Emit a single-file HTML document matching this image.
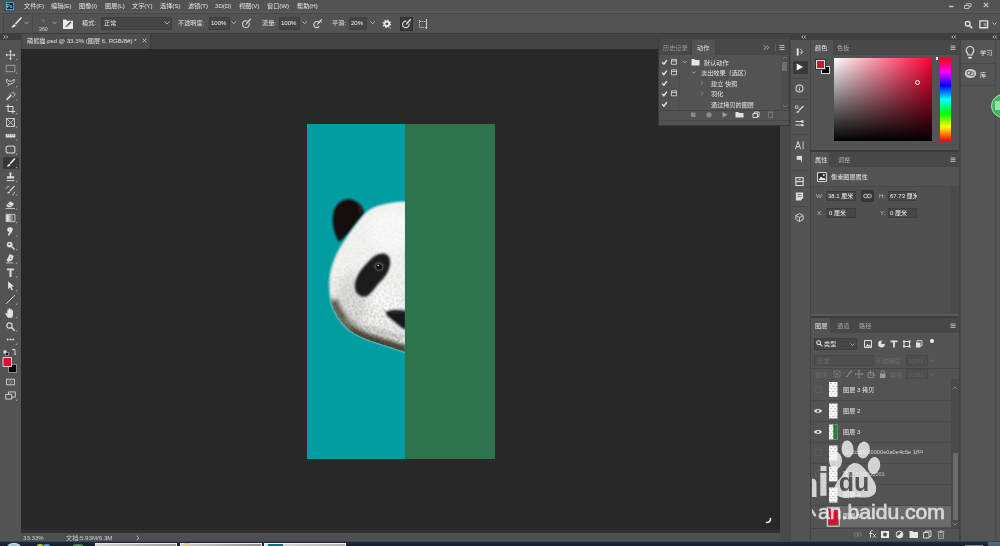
<!DOCTYPE html>
<html lang="zh">
<head>
<meta charset="utf-8">
<title>Photoshop</title>
<style>
*{margin:0;padding:0;box-sizing:border-box}
html,body{width:1000px;height:546px;overflow:hidden;background:#535353}
body{position:relative;font-family:"Liberation Sans","Noto Sans CJK SC",sans-serif;font-size:6.15px;color:#e4e4e4;line-height:1}
.a{position:absolute}
.t{position:absolute;white-space:nowrap;line-height:8px;height:8px;will-change:transform}
svg{display:block;overflow:visible}
.ic{position:absolute;fill:none;stroke:#d6d6d6;stroke-width:1}
.dim{color:#8a8a8a}
</style>
</head>
<body>

<!-- ===== base blocks ===== -->
<div class="a" id="menubar" style="left:0;top:0;width:1000px;height:13px;background:#525252"></div>
<div class="a" style="left:0;top:11px;width:1000px;height:2px;background:#585858"></div>
<div class="a" id="optbar" style="left:0;top:13px;width:1000px;height:20px;background:#535353;border-top:1px solid #474747"></div>
<div class="a" id="tabbar" style="left:0;top:33px;width:1000px;height:16px;background:#434343;border-top:1px solid #3a3a3a"></div>
<div class="a" id="canvas" style="left:21px;top:48.5px;width:758.5px;height:481px;background:#282828"></div>
<div class="a" id="toolbar" style="left:0;top:39px;width:21px;height:494px;background:#535353"></div>
<div class="a" style="left:0;top:33px;width:21px;height:6.5px;background:#3d3d3d"></div>
<div class="a" id="statusbar" style="left:21px;top:529.5px;width:759px;height:12px;background:#4e4e4e;border-top:3px solid #303030"></div>

<!-- MENU -->
<div class="a" style="left:3.500px;top:0;width:11px;height:12px;background:#2c5d70;opacity:.55;border-radius:1px"></div>
<div class="a" style="left:5.5px;top:1.5px;width:8px;height:8.5px;background:#0c2236;border:.5px solid #4f9fc0;color:#8ccbe6;font-size:4.5px;font-weight:bold;line-height:7.5px;text-align:center">Ps</div>
<div class="t" style="left:24px;top:2px">文件(F)</div>
<div class="t" style="left:51px;top:2px">编辑(E)</div>
<div class="t" style="left:79px;top:2px">图像(I)</div>
<div class="t" style="left:105px;top:2px">图层(L)</div>
<div class="t" style="left:132px;top:2px">文字(Y)</div>
<div class="t" style="left:160px;top:2px">选择(S)</div>
<div class="t" style="left:188px;top:2px">滤镜(T)</div>
<div class="t" style="left:215px;top:2px">3D(D)</div>
<div class="t" style="left:239px;top:2px">视图(V)</div>
<div class="t" style="left:267px;top:2px">窗口(W)</div>
<div class="t" style="left:297px;top:2px">帮助(H)</div>
<svg class="ic" style="left:944px;top:0" width="50" height="11" viewBox="0 0 50 11"><path d="M5 6.500h4.500" stroke-width="1.500" stroke="#c4c4c4"/><path d="M20.500 5.500h4.500v3h-4.500zM22.300 5.500v-1.800h4.700v3h-2" stroke-width=".9" stroke="#c4c4c4"/><path d="M39.800 2.800l4.400 4.400M44.200 2.800l-4.400 4.400" stroke-width="1.100" stroke="#c8c8c8"/></svg>
<!-- OPTIONS -->
<div class="a" style="left:3px;top:15px;width:1px;height:17px;background:#474747"></div><div class="a" style="left:32px;top:15px;width:1px;height:17px;background:#4a4a4a"></div>
<svg class="ic" style="left:9px;top:16px" width="14" height="14" viewBox="0 0 14 14"><path d="M12.500 1.500L6.500 8" stroke-width="1.700" stroke="#e4e4e4"/><path d="M5.800 8.300c-1.600.2-2 1.500-3.600 3 2 .6 4.300-.3 4.600-2z" fill="#e4e4e4" stroke="none"/></svg>
<svg class="ic" style="left:24px;top:21px" width="5" height="4" viewBox="0 0 5 4"><path d="M.5.800l2 2 2-2" stroke="#bdbdbd" stroke-width=".8"/></svg>
<div class="a" style="left:42px;top:18.500px;width:3px;height:3px;border-radius:50%;background:#6d6d6d"></div>
<div class="t" style="left:38.500px;top:25.200px;font-size:5.200px;color:#d6d6d6">360</div>
<svg class="ic" style="left:52px;top:21px" width="5" height="4" viewBox="0 0 5 4"><path d="M.5.800l2 2 2-2" stroke="#bdbdbd" stroke-width=".8"/></svg>
<svg class="ic" style="left:63px;top:18px" width="10" height="11" viewBox="0 0 10 11"><path d="M0 1.500h3l1 1.200h6v8.300h-10z" fill="#e9e9e9" stroke="none"/><path d="M7.800 4L4.500 7.200" stroke="#3a3a3a" stroke-width="1.300"/><path d="M4.300 7.200c-.9.100-1.100.9-2 1.700 1.100.3 2.400-.2 2.600-1.100z" fill="#3a3a3a" stroke="none"/></svg>
<div class="t" style="left:82px;top:19px">模式:</div>
<div class="a" style="left:101px;top:17px;width:71px;height:12.500px;background:#454545;border:.5px solid #3e3e3e;border-radius:1px"></div>
<div class="t" style="left:104px;top:19px">正常</div>
<svg class="ic" style="left:163.500px;top:21px" width="6" height="4" viewBox="0 0 6 4"><path d="M.5.500l2.500 2.500 2.500-2.500" stroke="#c4c4c4" stroke-width=".9"/></svg>
<div class="t" style="left:178px;top:19px">不透明度:</div>
<div class="a" style="left:208.500px;top:17px;width:21px;height:12.500px;background:#454545;border:.5px solid #3e3e3e"></div>
<div class="t" style="left:210.500px;top:19.300px;font-size:6px;color:#f2f2f2">100%</div>
<svg class="ic" style="left:231px;top:21px" width="6" height="4" viewBox="0 0 6 4"><path d="M.5.500l2.200 2.200 2.200-2.200" stroke="#c4c4c4" stroke-width=".9"/></svg>
<svg class="ic" style="left:241px;top:18px" width="11" height="11" viewBox="0 0 13 13"><circle cx="5.800" cy="7.200" r="4" stroke="#d0d0d0" stroke-width="1.200"/><path d="M11.500 1L5.800 7.200" stroke="#535353" stroke-width="3"/><path d="M11.500 1L6.500 6.500" stroke="#e0e0e0" stroke-width="1.400"/><path d="M6.200 6.400l-1.400 2.200 2.200-1.200z" fill="#e0e0e0" stroke="none"/></svg>
<div class="t" style="left:262px;top:19px">流量:</div>
<div class="a" style="left:279px;top:17px;width:21px;height:12.500px;background:#454545;border:.5px solid #3e3e3e"></div>
<div class="t" style="left:281px;top:19.300px;font-size:6px;color:#f2f2f2">100%</div>
<svg class="ic" style="left:301.500px;top:21px" width="6" height="4" viewBox="0 0 6 4"><path d="M.5.500l2.200 2.200 2.200-2.200" stroke="#c4c4c4" stroke-width=".9"/></svg>
<svg class="ic" style="left:312px;top:18px" width="11" height="11" viewBox="0 0 13 13"><path d="M8.500 5.500a3.600 3.600 0 1 0 0 4.500" stroke="#d8d8d8" stroke-width="1.300"/><path d="M11.500 1.500L6.800 7" stroke="#e0e0e0" stroke-width="1.400"/><path d="M9 3.500l2.500 1.800" stroke="#e0e0e0" stroke-width="1"/><path d="M6.500 6.800l-1.200 2 2-1z" fill="#e0e0e0" stroke="none"/></svg>
<div class="t" style="left:332px;top:19px">平滑:</div>
<div class="a" style="left:349px;top:17px;width:18px;height:12.500px;background:#454545;border:.5px solid #3e3e3e"></div>
<div class="t" style="left:351px;top:19.300px;font-size:6px;color:#f2f2f2">20%</div>
<svg class="ic" style="left:369.500px;top:21px" width="6" height="4" viewBox="0 0 6 4"><path d="M.5.500l2.200 2.200 2.200-2.200" stroke="#c4c4c4" stroke-width=".9"/></svg>
<svg class="ic" style="left:382px;top:19px" width="10.500" height="10.500" viewBox="0 0 12 12"><circle cx="5.500" cy="5.500" r="2.700" stroke="#e6e6e6" stroke-width="2.200"/><circle cx="5.500" cy="5.500" r="4.300" stroke="#e6e6e6" stroke-width="1.200" stroke-dasharray="1.700 1.680"/><circle cx="9.800" cy="10.200" r=".6" fill="#cfcfcf" stroke="none"/></svg>
<div class="a" style="left:400px;top:17px;width:13px;height:13.500px;background:#3a3a3a;border:.5px solid #303030"></div>
<svg class="ic" style="left:401px;top:18px" width="11" height="11" viewBox="0 0 11 11"><path d="M8 5.500a3.300 3.300 0 1 1-2.500-2.300" stroke="#d8d8d8" stroke-width="1.100"/><path d="M9.800 1.200L5.600 5.800" stroke="#e0e0e0" stroke-width="1.300"/><path d="M5.500 5.600l-1 1.700 1.700-.8z" fill="#e0e0e0" stroke="none"/></svg>
<svg class="ic" style="left:417px;top:17.500px" width="12" height="12" viewBox="0 0 12 12"><path d="M2.500 3.500h7v6h-7z" stroke="#bdbdbd" stroke-width="1" stroke-dasharray="1.400 .8"/><path d="M9.500 1v10M2 2l1.500 1.500" stroke="#d0d0d0" stroke-width="1"/></svg>
<svg class="ic" style="left:963.500px;top:19.500px" width="9.500" height="9.500" viewBox="0 0 11 11"><circle cx="4.300" cy="4.300" r="2.700" stroke="#e2e2e2" stroke-width="1.600"/><path d="M6.400 6.400l3 3" stroke="#e2e2e2" stroke-width="1.800"/></svg>
<svg class="ic" style="left:978.500px;top:19.500px" width="9.500" height="8.600" viewBox="0 0 11 10"><path d="M1 1h9v8h-9z" stroke="#e0e0e0" stroke-width="1.500"/><path d="M5.500 3.500h3.500v4h-3.500z" fill="#8f8f8f" stroke="none"/></svg>
<svg class="ic" style="left:992px;top:22px" width="5" height="4" viewBox="0 0 5 4"><path d="M.5.500l2 2 2-2" stroke="#c4c4c4" stroke-width=".9"/></svg>
<!-- TAB -->
<div class="a" style="left:22px;top:34px;width:129px;height:15px;background:#4e4e4e;border-right:1px solid #3c3c3c"></div>
<div class="t" style="left:27px;top:37px;color:#e0e0e0">萌熊猫.psd @ 33.3% (图层 6, RGB/8#) *</div>
<svg class="ic" style="left:141.500px;top:38px" width="5" height="5" viewBox="0 0 5 5"><path d="M.7.700l3.600 3.600M4.300.7l-3.600 3.600" stroke="#c8c8c8" stroke-width=".9"/></svg>
<svg class="ic" style="left:3px;top:34.500px" width="6" height="4" viewBox="0 0 6 4"><path d="M.7.500l1.500 1.500-1.500 1.500M3.200.5l1.500 1.500-1.500 1.500" stroke="#d8d8d8" stroke-width=".8"/></svg>
<!-- TOOLS -->
<div class="a" style="left:2.500px;top:157px;width:16px;height:12px;background:#383838;border-radius:1px"></div>
<svg class="a" style="left:0;top:0" width="22" height="410" viewBox="0 0 22 410" fill="none" stroke="#dcdcdc" stroke-width="1" stroke-linecap="butt">
<g transform="translate(10.500,55) scale(.8)"><path d="M0-5.500v11M-5.500 0h11" stroke-width="1.100"/><path d="M0-6.200l-1.900 2.200h3.800zM0 6.200l-1.900-2.200h3.800zM-6.200 0l2.200-1.900v3.800zM6.200 0l-2.200-1.900v3.800z" fill="#dcdcdc" stroke="none"/></g>
<g transform="translate(10.500,68.500) scale(.8)"><path d="M-5.500-4h11v8h-11z" stroke-dasharray="1.600 1.100" stroke-width="1.100"/></g>
<g transform="translate(10.500,82) scale(.8)"><path d="M-4.500-3.500c-1.500 3 .5 6 4 6s6-2.500 5-6c-1 1.500-2 2.500-4.500 2.500s-3.500-1-4.500-2.500z" stroke-width="1.100"/><path d="M-1.500 2.500l-2 3" stroke-width="1"/></g>
<g transform="translate(10.500,95.500) scale(.8)"><path d="M-5 5.500L1 -.5" stroke-width="1.900"/><path d="M3.500-5v2.500M3.500 .5v2M.5-1.500h-2M6.500-1.500h-2M1.500-3.500l1 1M5.500-3.500l-1 1M5.500 .5l-1-1" stroke-width=".9"/></g>
<g transform="translate(10.500,109) scale(.8)"><path d="M-3-6v9h9M-6-3h9v9" stroke-width="1.300"/></g>
<g transform="translate(10.500,122.500) scale(.8)"><path d="M-5-5h10v10h-10zM-5-5l10 10M5-5l-10 10" stroke-width="1"/></g>
<g transform="translate(10.500,135.500) scale(.8)"><path d="M-6-2h12v4.500h-12z" fill="#dcdcdc" stroke="none"/><path d="M-3.500-2v2.200M-1-2v2.200M1.500-2v2.200M4-2v2.200" stroke="#535353" stroke-width=".8"/></g>
<g transform="translate(10.500,149.500) scale(.8)"><path d="M-5.500-1.500a3 3 0 0 1 3-3h5a3 3 0 0 1 3 3v3a3 3 0 0 1-3 3h-5a3 3 0 0 1-3-3z" stroke-width="1.300"/></g>
<g transform="translate(10.500,163) scale(.8)"><path d="M5.500-5.500L-.5 1" stroke-width="1.800" stroke="#f0f0f0"/><path d="M-1.200 1.200c-1.600.2-2 1.500-3.700 3 2 .6 4.400-.3 4.700-2z" fill="#f0f0f0" stroke="none"/></g>
<g transform="translate(10.500,177) scale(.8)"><path d="M-1.500-5.500h3l-.7 4.500h3.700v3h-9v-3h3.700z" fill="#dcdcdc" stroke="none"/><path d="M-5 4.500h10" stroke-width="1.200"/></g>
<g transform="translate(10.500,190.500) scale(.8)"><path d="M5-5.500L-.5 .5" stroke-width="1.600"/><path d="M-1.200 .8c-1.400.2-1.800 1.300-3.300 2.700 1.800.5 3.900-.3 4.200-1.800z" fill="#dcdcdc" stroke="none"/><path d="M-5.500-2a5 5 0 0 1 4-3.500M2 5.500a5 5 0 0 0 3.500-4" stroke-width=".9"/></g>
<g transform="translate(10.500,204.500) scale(.8)"><path d="M-5.500 1.500l5-5.500 5 3-3.500 4.500h-4z" fill="#dcdcdc" stroke="none"/><path d="M-6 5h11.500" stroke-width="1"/><path d="M-3.500 -.5l4.500 3" stroke="#535353" stroke-width=".9"/></g>
<g transform="translate(10.500,218) scale(.8)"><path d="M-5.500-4.500h11v9h-11z" stroke-width="1.100"/><path d="M-5-4h3v8h-3z" fill="#e6e6e6" stroke="none"/><path d="M-2-4h2.500v8h-2.500z" fill="#b4b4b4" stroke="none"/><path d="M.5-4h2.500v8h-2.500z" fill="#868686" stroke="none"/></g>
<g transform="translate(10.500,231.500) scale(.8)"><path d="M-3.500-4.500c2-1.500 5-1 6 .5s.5 3-1 3.500c1 .5.500 2-1 2.500l-2.500 3.500c-.8-.3-1.200-1-1-2l1.500-3c-2.500-.5-3.500-3-2-5z" fill="#dcdcdc" stroke="none"/></g>
<g transform="translate(10.500,245) scale(.8)"><circle cx="-1" cy="-.5" r="3.600" fill="#dcdcdc" stroke="none"/><path d="M1.500 2l3.500 3.500" stroke-width="1.700"/><circle cx="-1.500" cy="-1" r="1.100" fill="#535353" stroke="none"/></g>
<g transform="translate(10.500,258.500) scale(.8)"><path d="M-1-5.500l5 2-1.500 5.500-5 2.500-2.500-2z" fill="#dcdcdc" stroke="none"/><path d="M-5.500 5.500h9" stroke-width="1"/><circle cx="0" cy="-.5" r=".9" fill="#535353" stroke="none"/></g>
<g transform="translate(10.500,272.500) scale(.8)"><path d="M-4.500-5h9v2.200h-3.200v8.300h-2.600v-8.300h-3.200z" fill="#dcdcdc" stroke="none"/></g>
<g transform="translate(10.500,286) scale(.8)"><path d="M-3-6v10l2.500-2.500 2 4 1.600-.8-2-4h3.400z" fill="#e8e8e8" stroke="none"/></g>
<g transform="translate(10.500,299.500) scale(.8)"><path d="M-5.500 5.500l11-11" stroke-width="1.200"/></g>
<g transform="translate(10.500,313) scale(.8)"><path d="M-3 6c-1.500-2-3-4-3.500-5.500.8-.8 1.700-.3 2.500.8v-5c.7-.8 1.500-.6 1.800 0v-1.600c.7-.8 1.600-.6 1.900 0v.8c.7-.7 1.500-.5 1.800.2v1.300c.7-.6 1.500-.4 1.700.3 0 3 .2 5.500-1.200 8.700z" fill="#e2e2e2" stroke="none"/></g>
<g transform="translate(10.500,326.500) scale(.8)"><circle cx="-1.200" cy="-1.200" r="3.300" stroke-width="1.400"/><path d="M1.300 1.300l4 4" stroke-width="1.800"/></g>
<g transform="translate(10.500,339.500) scale(.8)"><circle cx="-3.500" cy="0" r="1.100" fill="#e2e2e2" stroke="none"/><circle cx="0" cy="0" r="1.100" fill="#e2e2e2" stroke="none"/><circle cx="3.500" cy="0" r="1.100" fill="#e2e2e2" stroke="none"/></g>
<g transform="translate(0,352)"><path d="M3.500-1.500h3v3h-3z" fill="#e8e8e8" stroke="none"/><path d="M5.500 .5h3v3h-3z" fill="#111" stroke="#e8e8e8" stroke-width=".5"/><path d="M12.500-2.500h2.500v2.500M15 0v2.500" stroke-width=".9"/><path d="M12-2.500l1.300-1.200v2.400zM15 3.200l-1.200-1.300h2.400z" fill="#dcdcdc" stroke="none"/></g>
<path d="M17.200 60.3v-1.700l-1.700 1.700z" fill="#b4b4b4" stroke="none"/><path d="M17.200 73.8v-1.700l-1.700 1.700z" fill="#b4b4b4" stroke="none"/><path d="M17.200 87.3v-1.700l-1.700 1.700z" fill="#b4b4b4" stroke="none"/><path d="M17.200 100.8v-1.700l-1.700 1.700z" fill="#b4b4b4" stroke="none"/><path d="M17.200 114.3v-1.700l-1.700 1.700z" fill="#b4b4b4" stroke="none"/><path d="M17.200 127.8v-1.700l-1.700 1.700z" fill="#b4b4b4" stroke="none"/><path d="M17.200 140.8v-1.700l-1.700 1.700z" fill="#b4b4b4" stroke="none"/><path d="M17.200 154.800v-1.700l-1.700 1.700z" fill="#b4b4b4" stroke="none"/><path d="M17.200 168.300v-1.700l-1.700 1.700z" fill="#b4b4b4" stroke="none"/><path d="M17.200 182.300v-1.700l-1.700 1.700z" fill="#b4b4b4" stroke="none"/><path d="M17.200 195.800v-1.700l-1.700 1.700z" fill="#b4b4b4" stroke="none"/><path d="M17.200 209.800v-1.700l-1.700 1.700z" fill="#b4b4b4" stroke="none"/><path d="M17.200 223.300v-1.700l-1.700 1.700z" fill="#b4b4b4" stroke="none"/><path d="M17.200 236.800v-1.700l-1.700 1.700z" fill="#b4b4b4" stroke="none"/><path d="M17.200 250.300v-1.700l-1.700 1.700z" fill="#b4b4b4" stroke="none"/><path d="M17.200 263.800v-1.700l-1.700 1.700z" fill="#b4b4b4" stroke="none"/><path d="M17.200 277.800v-1.700l-1.700 1.700z" fill="#b4b4b4" stroke="none"/><path d="M17.200 291.300v-1.700l-1.700 1.700z" fill="#b4b4b4" stroke="none"/><path d="M17.200 304.800v-1.700l-1.700 1.700z" fill="#b4b4b4" stroke="none"/><path d="M17.200 318.300v-1.700l-1.700 1.700z" fill="#b4b4b4" stroke="none"/><path d="M17.200 331.800v-1.700l-1.700 1.700z" fill="#b4b4b4" stroke="none"/><path d="M17.200 344.800v-1.700l-1.700 1.700z" fill="#b4b4b4" stroke="none"/><path d="M17.200 400.800v-1.700l-1.700 1.700z" fill="#b4b4b4" stroke="none"/>
<path d="M8.500 364.500h8v8h-8z" fill="#000" stroke="#cfcfcf" stroke-width=".6"/>
<path d="M3 357.500h8.500v9h-8.500z" fill="#d4122f" stroke="#e6e6e6" stroke-width=".9"/>
<g transform="translate(10.500,382) scale(.8)"><path d="M-5-3.500h10v7h-10z" stroke-width="1.100"/><circle cx="0" cy="0" r="1.800" stroke-width=".9" stroke-dasharray="1 .7"/></g>
<g transform="translate(10.500,395.500) scale(.8)"><path d="M-2.500-4.500h8.500v6.500h-8.500z" stroke-width="1.100"/><path d="M-6-1.500h7.500v6h-7.500z" fill="#535353" stroke-width="1.100"/></g>
</svg>
<!-- DOC -->
<div class="a" style="left:306.500px;top:124px;width:98.500px;height:335px;background:#029da0"></div>
<div class="a" style="left:405px;top:124px;width:90px;height:335px;background:#2e724e"></div>
<svg class="a" style="left:306px;top:124px" width="100" height="335" viewBox="306 124 100 335">
<defs>
<clipPath id="pc"><rect x="306" y="124" width="99" height="335"/></clipPath>
<filter id="b1" x="-20%" y="-20%" width="140%" height="140%"><feGaussianBlur stdDeviation=".9"/></filter>
<filter id="b2" x="-30%" y="-30%" width="160%" height="160%"><feGaussianBlur stdDeviation="2.200"/></filter>
<filter id="b4" x="-30%" y="-30%" width="160%" height="160%"><feGaussianBlur stdDeviation="4"/></filter>
<filter id="fur" x="0" y="0" width="100%" height="100%"><feTurbulence type="fractalNoise" baseFrequency=".38" numOctaves="2" seed="3" result="n"/><feColorMatrix in="n" type="matrix" values="0 0 0 0 0  0 0 0 0 0  0 0 0 0 0  0 0 0 -1.6 1.05"/><feComposite in2="SourceGraphic" operator="in"/></filter>
<linearGradient id="fg" x1="0" y1="0" x2="0" y2="1"><stop offset="0" stop-color="#85857e" stop-opacity=".02"/><stop offset=".4" stop-color="#85857e" stop-opacity=".06"/><stop offset=".7" stop-color="#80807a" stop-opacity=".16"/><stop offset="1" stop-color="#6f6f64" stop-opacity=".34"/></linearGradient><clipPath id="hc"><path id="hp" d="M406 201.500C397 201.500 386 203 376 206.500C369.500 209 365 212.500 362.500 216C356 223.500 349 233 343.500 242C337.500 251 332 262 330 274C328.500 284 329 295 332 305C335 314 340.500 322 348 329C356 335 365 339 376 342.500C386 345.500 396 348.500 406 352.500z"/></clipPath>
</defs>
<g clip-path="url(#pc)">
<path d="M364.500 213C362.500 206 357 200.300 349.500 199.300C342 198.800 335.500 204 333.500 212.500C331.500 222 333.500 233 339 242C346 237 356.500 224 364.500 213z" fill="#15100f" filter="url(#b1)"/>
<path d="M357 203c3 1 5 4 6 7l-4 5c0-5-1-9-2-12z" fill="#5a2a22" opacity=".5" filter="url(#b1)"/>
<g filter="url(#b1)"><use href="#hp" fill="#f3f3f1"/></g>
<g clip-path="url(#hc)">
<ellipse cx="352" cy="300" rx="16" ry="26" fill="#c9ccca" opacity=".55" filter="url(#b4)"/>
<ellipse cx="385" cy="300" rx="14" ry="12" fill="#fbfbfb" opacity=".9" filter="url(#b4)"/>
<ellipse cx="390" cy="232" rx="22" ry="20" fill="#fafafa" opacity=".9" filter="url(#b4)"/>
<path d="M333 300C338 316 350 330 366 337C380 342 394 346 406 351" fill="none" stroke="#5c594b" stroke-width="9" opacity=".95" filter="url(#b2)"/>
<path d="M350 331C362 338 385 344 406 350" fill="none" stroke="#453f33" stroke-width="5.500" opacity=".85" filter="url(#b2)"/>
<path d="M346 318c10 8 30 14 58 20" fill="none" stroke="#b9bbb5" stroke-width="5" opacity=".7" filter="url(#b2)"/>
<rect x="326" y="198" width="80" height="158" fill="url(#fg)" filter="url(#fur)"/>
</g>
<path d="M383.500 253.500C388.500 254 391 259 390 265C389 271 385.500 276.500 380.500 281.500C376 286 372.500 292 368 295.500C363 298.500 357 295.500 355.300 289.500C353.800 283.500 356.500 276.500 361 270C366 263.500 371 258.500 375.500 255.500C378 254 381 253.300 383.500 253.500z" fill="#1b1a1c" filter="url(#b1)"/>
<ellipse cx="379" cy="266.500" rx="4.700" ry="4.100" fill="#64646a" opacity=".85" filter="url(#b1)"/>
<ellipse cx="379" cy="266.800" rx="2.900" ry="2.700" fill="#0d0d10"/>
<circle cx="378.200" cy="265.600" r=".8" fill="#d8d8de"/>
<path d="M385.500 312.300C390 309.300 399 309.800 406 310.800L406 330C401.500 328 397.500 324.500 393.500 321C390.500 318.500 386.500 316 385.500 312.300z" fill="#17181a" filter="url(#b1)"/>
<path d="M390 313.500c4-1.200 9-.8 14 0" fill="none" stroke="#4a4d52" stroke-width="1.200" opacity=".8" filter="url(#b1)"/>
<path d="M384 309c1 2 1.500 3 2.500 4" fill="none" stroke="#9a9a9a" stroke-width="1" opacity=".7"/>
</g>
</svg>
<svg class="ic" style="left:765px;top:517px" width="7" height="7" viewBox="0 0 7 7"><path d="M5.500 1.500c0 3-1 4-4 4" stroke="#ececec" stroke-width="1.500" stroke-linecap="round"/></svg>
<!-- RIGHT -->
<div class="a" style="left:779.500px;top:48.500px;width:10.500px;height:492.500px;background:#4a4a4a"></div>
<div class="a" style="left:789px;top:33px;width:211px;height:7px;background:#3f3f3f"></div>
<div class="a" style="left:790px;top:40px;width:19.500px;height:501px;background:#535353;border-left:1px solid #474747"></div>
<div class="a" style="left:809.500px;top:40px;width:1.500px;height:501px;background:#444"></div>
<div class="a" style="left:959px;top:40px;width:2px;height:501px;background:#444"></div>
<div class="a" style="left:961px;top:40px;width:39px;height:501px;background:#545454"></div>
<div class="a" style="left:994.500px;top:40px;width:1px;height:501px;background:#4b4b4b"></div>
<svg class="ic" style="left:801px;top:34.500px" width="6" height="4" viewBox="0 0 6 4"><path d="M2.300.5L.8 2l1.500 1.500M4.800.5L3.300 2l1.500 1.500" stroke="#d8d8d8" stroke-width=".8"/></svg>
<svg class="ic" style="left:950.500px;top:34.500px" width="6" height="4" viewBox="0 0 6 4"><path d="M2.300.5L.8 2l1.500 1.500M4.800.5L3.300 2l1.500 1.500" stroke="#d8d8d8" stroke-width=".8"/></svg>
<svg class="ic" style="left:991.500px;top:34.500px" width="6" height="4" viewBox="0 0 6 4"><path d="M2.300.5L.8 2l1.500 1.500M4.800.5L3.300 2l1.500 1.500" stroke="#d8d8d8" stroke-width=".8"/></svg>

<!-- icon strip -->
<div class="a" style="left:793px;top:60.500px;width:14.500px;height:13px;background:#383838;border-radius:1px"></div>
<svg class="a" style="left:790px;top:40px" width="20" height="200" viewBox="790 40 20 200" fill="none" stroke="#dcdcdc" stroke-width="1">
<path d="M792 78.500h16M792 99.500h16M792 134.500h16M792 170.500h16M792 206.500h16" stroke="#474747" stroke-width="1"/>
<g transform="translate(799.500,52) scale(.8)"><path d="M-3.500-4.500h2.500v9h-2.500z" fill="#dcdcdc" stroke="none"/><path d="M1-3.500c2.500 1 3 4.500 .5 6.500" stroke-width="1.200"/><path d="M.5-.5l1.500 1.500 1.800-1.500" stroke-width=".9"/></g>
<g transform="translate(799.500,67) scale(.8)"><path d="M-3.500-4.500l8 4.500-8 4.500z" fill="#f2f2f2" stroke="none"/></g>
<g transform="translate(799.500,88.500) scale(.8)"><circle r="4.300" stroke-width="1.300"/><path d="M0-2.300v.9M0-.3v2.800" stroke-width="1.300"/></g>
<g transform="translate(799.500,109.500) scale(.8)"><path d="M5-4.500L-.5 1" stroke-width="1.600"/><path d="M-1 1.200c-1.400.2-1.800 1.300-3.300 2.700 1.800.5 3.900-.3 4.200-1.800z" fill="#dcdcdc" stroke="none"/><path d="M-5-4.500h3v3h-3z" stroke-width=".9"/></g>
<g transform="translate(799.500,123.500) scale(.8)"><path d="M-5-2.500h7M-5 2h7" stroke-width="1.300"/><path d="M2-4h3v3h-3zM2 .5h3v3h-3z" fill="#dcdcdc" stroke="none"/></g>
<g transform="translate(799.500,145.500) scale(.8)"><path d="M-5 4.500l3.200-9.500 3.200 9.500M-3.800 1.500h4" stroke-width="1.200"/><path d="M4.500-5v9.500" stroke-width="1.100"/></g>
<g transform="translate(799.500,159.500) scale(.8)"><path d="M-3.500-4.500h6v5h-6z" fill="#dcdcdc" stroke="none"/><path d="M2.500-4.500v8" stroke-width="1.100"/></g>
<g transform="translate(799.500,181.500) scale(.8)"><path d="M-4.500-5h9v10h-9z" stroke-width="1.400"/><path d="M-4.500 0h9" stroke-width="1.400"/><path d="M-1.500-2.800h3" stroke-width="1.300"/></g>
<g transform="translate(799.500,196.500) scale(.8)"><path d="M-4.500-5h9v7l-3 3h-6z" fill="#dcdcdc" stroke="none"/><path d="M-2.500-2.500h5M-2.500 0h5" stroke="#535353" stroke-width=".9"/></g>
<g transform="translate(799.500,217.500) scale(.8)"><path d="M0-5l4.500 2.500v5l-4.500 2.500-4.500-2.500v-5zM-4.500-2.500l4.500 2.500 4.500-2.500M0 0v5" stroke-width="1.100"/></g>
</svg>

<!-- learn column -->
<svg class="ic" style="left:964px;top:45px" width="12" height="15" viewBox="0 0 12 15"><path d="M6 1.500a3.800 3.800 0 0 1 2.200 6.900v1.600h-4.400v-1.600a3.800 3.800 0 0 1 2.200-6.900z" stroke="#dcdcdc" stroke-width="1.100"/><path d="M4.300 11.800h3.400v1.700h-3.400z" fill="#e8e8e8" stroke="none"/></svg>
<div class="t" style="left:980px;top:49px">学习</div>
<svg class="ic" style="left:964px;top:68px" width="13" height="11" viewBox="0 0 13 11"><ellipse cx="6.500" cy="5.500" rx="5.700" ry="4.500" fill="#cfcfcf" stroke="none"/><circle cx="5" cy="5" r="2" stroke="#535353" stroke-width=".9"/><circle cx="8" cy="5.800" r="2" stroke="#535353" stroke-width=".9"/></svg>
<div class="t" style="left:980px;top:70.500px">库</div>
<div class="a" style="left:961px;top:62.500px;width:34px;height:1px;background:#494949"></div>
<div class="a" style="left:961px;top:84.500px;width:34px;height:1px;background:#494949"></div>
<div class="a" style="left:991px;top:94px;width:24px;height:24px;border-radius:50%;background:#3dbb5e;border:1.500px solid #a8e4b6"></div><div class="a" style="left:995px;top:101px;width:6px;height:9px;background:#c9efd2;opacity:.7;border-radius:1px"></div>

<!-- color panel -->
<div class="a" style="left:811px;top:40px;width:148px;height:14.500px;background:#484848"></div>
<div class="a" style="left:811px;top:40px;width:21.500px;height:14.500px;background:#535353"></div>
<div class="t" style="left:815px;top:43.500px;color:#e4e4e4">颜色</div>
<div class="t" style="left:837px;top:43.500px;color:#a8a8a8">色板</div>
<svg class="ic" style="left:950px;top:44.500px" width="6" height="6" viewBox="0 0 6 6"><path d="M.5 1h5M.5 2.700h5M.5 4.400h5" stroke="#c6c6c6" stroke-width=".9"/></svg>
<div class="a" style="left:821px;top:65.500px;width:8.500px;height:8.500px;background:#000;border:.7px solid #d8d8d8"></div>
<div class="a" style="left:815.500px;top:59.500px;width:9.500px;height:9.500px;background:#d4122f;border:1px solid #e0e0e0;outline:.5px solid #333"></div>
<div class="a" style="left:834px;top:58px;width:98px;height:83px;background:linear-gradient(to bottom,rgba(0,0,0,0),#000),linear-gradient(to right,#fff,#ff0033)"></div>
<div class="a" style="left:914.500px;top:79.500px;width:5px;height:5px;border-radius:50%;border:.8px solid #f0f0f0"></div>
<div class="a" style="left:940px;top:58px;width:11px;height:83px;background:linear-gradient(to bottom,#ff0000 0%,#ff00ff 17%,#0000ff 33%,#00ffff 50%,#00ff00 67%,#ffff00 83%,#ff0000 100%)"></div>
<div class="a" style="left:935.500px;top:57px;width:2.800px;height:2.800px;background:#f4f4f4"></div>
<div class="a" style="left:811px;top:150px;width:148px;height:2px;background:#3c3c3c"></div>

<!-- properties panel -->
<div class="a" style="left:811px;top:152px;width:148px;height:15px;background:#484848"></div>
<div class="a" style="left:811px;top:152px;width:18px;height:15px;background:#535353"></div>
<div class="t" style="left:815px;top:156px;color:#e4e4e4">属性</div>
<div class="t" style="left:838px;top:156px;color:#a8a8a8">调整</div>
<svg class="ic" style="left:950px;top:156.500px" width="6" height="6" viewBox="0 0 6 6"><path d="M.5 1h5M.5 2.700h5M.5 4.400h5" stroke="#c6c6c6" stroke-width=".9"/></svg>
<div class="a" style="left:811px;top:185.500px;width:140px;height:128px;background:#505050;border-top:1px solid #4a4a4a"></div>
<div class="a" style="left:951px;top:186px;width:8px;height:128px;background:#4a4a4a"></div>
<svg class="ic" style="left:816.500px;top:171.500px" width="10" height="10" viewBox="0 0 10 10"><path d="M.6.600h8.800v8.800h-8.800z" fill="#2e2e2e" stroke="#e0e0e0" stroke-width="1"/><path d="M1.500 8l2.500-3.500 2 2 1-1 1.800 2.500z" fill="#f0f0f0" stroke="none"/><circle cx="6.800" cy="3" r=".9" fill="#f0f0f0" stroke="none"/></svg>
<div class="t" style="left:831px;top:172.500px">像素图层属性</div>
<div class="t" style="left:816px;top:192px;color:#bdbdbd">W:</div>
<div class="a" style="left:826px;top:191px;width:30px;height:10px;background:#454545;border:.5px solid #3e3e3e"></div>
<div class="t" style="left:828px;top:192px;font-size:6px;color:#f2f2f2">38.1 厘米</div>
<div class="a" style="left:861px;top:189.500px;width:12.500px;height:12.500px;background:#383838"></div>
<svg class="ic" style="left:863px;top:193px" width="9" height="6" viewBox="0 0 9 6"><circle cx="2.600" cy="3" r="1.900" stroke="#d4d4d4" stroke-width=".9"/><circle cx="6.400" cy="3" r="1.900" stroke="#d4d4d4" stroke-width=".9"/></svg>
<div class="t" style="left:879px;top:192px;color:#bdbdbd">H:</div>
<div class="a" style="left:887.500px;top:191px;width:29.500px;height:10px;background:#454545;border:.5px solid #3e3e3e"></div>
<div class="t" style="left:889.500px;top:192px;font-size:6px;color:#f2f2f2;width:27px;overflow:hidden">67.73 厘米</div>
<div class="t" style="left:817px;top:208.500px;color:#bdbdbd">X:</div>
<div class="a" style="left:826px;top:207.500px;width:30px;height:10px;background:#454545;border:.5px solid #3e3e3e"></div>
<div class="t" style="left:828.500px;top:208.500px;font-size:6px;color:#f2f2f2">0 厘米</div>
<div class="t" style="left:880px;top:208.500px;color:#bdbdbd">Y:</div>
<div class="a" style="left:887.500px;top:207.500px;width:29.500px;height:10px;background:#454545;border:.5px solid #3e3e3e"></div>
<div class="t" style="left:889.500px;top:208.500px;font-size:6px;color:#f2f2f2">0 厘米</div>
<div class="a" style="left:811px;top:314px;width:148px;height:2px;background:#5a5a5a"></div>
<div class="a" style="left:811px;top:316px;width:148px;height:2px;background:#3c3c3c"></div>
<!-- ACTIONS -->
<div class="a" style="left:657.500px;top:38.500px;width:132px;height:87px;background:#535353;border:1px solid #3a3a3a;border-top-color:#4a4a4a"></div>
<div class="a" style="left:658.500px;top:39.500px;width:130px;height:15px;background:#484848"></div><div class="a" style="left:690px;top:39.500px;width:2px;height:15px;background:#434343"></div>
<div class="a" style="left:692px;top:39.500px;width:23px;height:15px;background:#535353"></div>
<div class="t" style="left:663px;top:43.500px;color:#9c9c9c">历史记录</div>
<div class="t" style="left:697px;top:43.500px;color:#e0e0e0">动作</div>
<svg class="ic" style="left:763px;top:44px" width="24" height="7" viewBox="0 0 24 7"><path d="M1 1.500l2 2-2 2M3.800 1.500l2 2-2 2" stroke="#c8c8c8" stroke-width=".9"/><path d="M12.500 0v7" stroke="#6a6a6a" stroke-width=".8"/><path d="M16.500 1.500h5M16.500 3.500h5M16.500 5.500h5" stroke="#c6c6c6" stroke-width=".9"/></svg>
<div class="a" style="left:658.500px;top:109.500px;width:130px;height:1px;background:#444"></div>
<div class="a" style="left:658.500px;top:120px;width:130px;height:1px;background:#484848"></div>
<div class="a" style="left:780.500px;top:55px;width:8px;height:54px;background:#4d4d4d"></div>
<div class="a" style="left:782px;top:62px;width:5px;height:8.500px;background:#6e6e6e"></div>
<svg class="ic" style="left:781.500px;top:56px" width="6" height="4" viewBox="0 0 6 4"><path d="M.8 3l2.200-2 2.200 2" stroke="#8a8a8a" stroke-width=".8"/></svg>
<svg class="ic" style="left:781.500px;top:104px" width="6" height="4" viewBox="0 0 6 4"><path d="M.8 1l2.200 2 2.200-2" stroke="#8a8a8a" stroke-width=".8"/></svg>
<svg class="a" style="left:658px;top:55px" width="125" height="68" viewBox="658 55 125 68" fill="none">
<path d="M662.3 62.3l1.600 1.800 3-4" stroke="#e8e8e8" stroke-width="1.400"/><path d="M671.5 59.3h5v5h-5zM671.5 61h5" stroke="#cfcfcf" stroke-width=".9"/><path d="M662.3 72.8l1.600 1.800 3-4" stroke="#e8e8e8" stroke-width="1.400"/><path d="M671.5 69.800h5v5h-5zM671.5 71.500h5" stroke="#cfcfcf" stroke-width=".9"/><path d="M662.3 83.300l1.600 1.800 3-4" stroke="#e8e8e8" stroke-width="1.400"/><path d="M662.3 93.800l1.600 1.800 3-4" stroke="#e8e8e8" stroke-width="1.400"/><path d="M671.5 90.800h5v5h-5zM671.5 92.500h5" stroke="#cfcfcf" stroke-width=".9"/><path d="M662.3 104.300l1.600 1.800 3-4" stroke="#e8e8e8" stroke-width="1.400"/><path d="M683 61l1.800 1.800 1.800-1.800" stroke="#bdbdbd" stroke-width=".8"/>
<path d="M692 71.500l1.800 1.800 1.800-1.800" stroke="#bdbdbd" stroke-width=".8"/>
<path d="M701.200 81.200l1.600 1.800-1.600 1.800M701.200 91.700l1.600 1.800-1.600 1.800" stroke="#9a9a9a" stroke-width=".8"/>
<path d="M691.500 59h3l.8 1h4.200v5.500h-8z" fill="#e6e6e6"/>
<path d="M668.500 56v53M679.500 56v53" stroke="#4a4a4a" stroke-width=".7"/>
<rect x="691" y="112.500" width="4.500" height="4.500" fill="#8a8a8a"/>
<circle cx="709" cy="114.800" r="2.600" fill="#8a8a8a"/>
<path d="M722.500 112l5 2.800-5 2.800z" fill="#9a9a9a"/>
<path d="M735.500 112h2.800l.8 1h4.400v4.500h-8z" fill="#e2e2e2"/>
<path d="M753 113.500v4h4.500v-4zM754.500 113.500v-1.500h4.500v4.500h-1.500" stroke="#e2e2e2" stroke-width=".9"/>
<path d="M768.500 112.500h4v5h-4zM767.500 112h6" stroke="#7a7a7a" stroke-width=".9"/>
</svg>
<div class="t" style="left:704px;top:58.500px">默认动作</div>
<div class="t" style="left:700.500px;top:69px">淡出效果（选区）</div>
<div class="t" style="left:710.500px;top:79.500px">建立 快照</div>
<div class="t" style="left:710.500px;top:90px">羽化</div>
<div class="t" style="left:710.500px;top:100.500px">通过拷贝的图层</div>
<!-- LAYERS -->
<div class="a" style="left:811px;top:318px;width:148px;height:15px;background:#484848"></div>
<div class="a" style="left:811px;top:318px;width:19px;height:15px;background:#535353"></div>
<div class="t" style="left:815px;top:322px;color:#e4e4e4">图层</div>
<div class="t" style="left:837px;top:322px;color:#a8a8a8">通道</div>
<div class="t" style="left:859px;top:322px;color:#a8a8a8">路径</div>
<svg class="ic" style="left:950px;top:322.500px" width="6" height="6" viewBox="0 0 6 6"><path d="M.5 1h5M.5 2.700h5M.5 4.400h5" stroke="#c6c6c6" stroke-width=".9"/></svg>
<div class="a" style="left:814px;top:337.500px;width:43px;height:12.500px;background:#454545;border:.5px solid #3e3e3e"></div>
<svg class="ic" style="left:816px;top:340px" width="7" height="7" viewBox="0 0 7 7"><circle cx="2.700" cy="2.700" r="1.900" stroke="#e2e2e2" stroke-width="1.100"/><path d="M4.200 4.200l2.200 2.200" stroke="#e2e2e2" stroke-width="1.200"/></svg>
<div class="t" style="left:824px;top:340px">类型</div>
<svg class="ic" style="left:850px;top:342.500px" width="5" height="4" viewBox="0 0 5 4"><path d="M.5.500l2 2 2-2" stroke="#bdbdbd" stroke-width=".8"/></svg>
<svg class="a" style="left:860px;top:334px" width="80" height="18" viewBox="860 334 80 18" fill="none">
<path d="M864.500 340.500h7v7h-7z" stroke="#e0e0e0" stroke-width="1"/><path d="M865.500 346.500l2-2.500 1.500 1.500 1-1 1 2z" fill="#e0e0e0"/>
<circle cx="881.500" cy="344" r="3.400" fill="#e0e0e0"/><path d="M881.500 340.600a3.400 3.400 0 0 1 3.400 3.400h-3.400z" fill="#535353"/>
<path d="M890.500 340.500h7v1.800h-2.600v5.200h-1.800v-5.200h-2.600z" fill="#e0e0e0"/>
<path d="M904 341.500h5.500v5h-5.500z" stroke="#e0e0e0" stroke-width="1"/><path d="M903 340.500h2v2h-2zM908.500 340.500h2v2h-2zM903 345.500h2v2h-2zM908.500 345.500h2v2h-2z" fill="#e0e0e0"/>
<path d="M916 342.500h4.500v5h-4.500z" fill="#e0e0e0"/><path d="M917 342.500v-1.800h5v5h-1.500" stroke="#e0e0e0" stroke-width=".9"/>
<circle cx="932" cy="341" r="2" fill="#f2f2f2"/>
</svg>
<div class="a" style="left:814px;top:354.500px;width:60px;height:11px;background:#4e4e4e;border:.5px solid #474747"></div>
<div class="t dim" style="left:817px;top:356.500px;color:#6e6e6e">正常</div>
<div class="t dim" style="left:876px;top:356.500px;color:#6e6e6e">不透明度:</div>
<div class="a" style="left:906px;top:354.500px;width:22px;height:11px;background:#4e4e4e;border:.5px solid #474747"></div>
<div class="t" style="left:908px;top:356.500px;color:#666;font-size:6px">100%</div>
<svg class="ic" style="left:929.500px;top:358.500px" width="5" height="4" viewBox="0 0 5 4"><path d="M.5.500l2 2 2-2" stroke="#6e6e6e" stroke-width=".8"/></svg>
<div class="a" style="left:811px;top:368px;width:148px;height:1px;background:#474747"></div>
<div class="t" style="left:814.500px;top:370.500px;color:#6e6e6e">锁定:</div>
<svg class="a" style="left:830px;top:368px" width="60" height="12" viewBox="830 368 60 12" fill="none" stroke="#8a8a8a">
<path d="M834 371h6v6h-6z" stroke-width=".9" stroke-dasharray="1.200 .8"/><path d="M835.500 372.500l3 3M838.500 372.500l-3 3" stroke-width=".7"/>
<path d="M852 370.500l-4 4.500" stroke-width="1.300"/><path d="M847.800 375.200c-1 .1-1.300.9-2.300 1.900 1.300.4 2.800-.2 3-1.300z" fill="#8a8a8a" stroke="none"/>
<path d="M859 370v8M855 374h8" stroke-width=".9"/><path d="M859 369.500l-1.300 1.500h2.600zM859 378.500l-1.300-1.500h2.600zM854.500 374l1.500-1.300v2.600zM863.500 374l-1.500-1.300v2.600z" fill="#8a8a8a" stroke="none"/>
<path d="M868 372.500h5.500v5h-5.500z" stroke-width=".9"/><path d="M870.500 370v5h5" stroke-width=".9"/>
<path d="M880 373.500h5.500v4.500h-5.500z" fill="#9a9a9a" stroke="none"/><path d="M881.200 373.500v-1.500a1.600 1.600 0 0 1 3.200 0v1.500" stroke-width=".9"/>
</svg>
<div class="t" style="left:890px;top:370.500px;color:#6e6e6e">填充:</div>
<div class="a" style="left:906px;top:369px;width:22px;height:11px;background:#4e4e4e;border:.5px solid #474747"></div>
<div class="t" style="left:908px;top:370.500px;color:#666;font-size:6px">100%</div>
<svg class="ic" style="left:929.500px;top:372.500px" width="5" height="4" viewBox="0 0 5 4"><path d="M.5.500l2 2 2-2" stroke="#6e6e6e" stroke-width=".8"/></svg>
<!-- rows -->
<div class="a" style="left:811px;top:379px;width:140px;height:149px;background:#535353"></div>
<div class="a" style="left:826px;top:506px;width:125px;height:21px;background:#6b6b6b"></div>
<div class="a" style="left:811px;top:400px;width:140px;height:1px;background:#4a4a4a"></div>
<div class="a" style="left:811px;top:421px;width:140px;height:1px;background:#4a4a4a"></div>
<div class="a" style="left:811px;top:442px;width:140px;height:1px;background:#4a4a4a"></div>
<div class="a" style="left:811px;top:463px;width:140px;height:1px;background:#4a4a4a"></div>
<div class="a" style="left:811px;top:484px;width:140px;height:1px;background:#4a4a4a"></div>
<div class="a" style="left:811px;top:505px;width:140px;height:1px;background:#4a4a4a"></div>
<div class="a" style="left:951px;top:379px;width:8px;height:149px;background:#4a4a4a"></div>
<div class="a" style="left:952.500px;top:453px;width:5px;height:67px;background:#6a6a6a"></div>
<svg class="ic" style="left:952px;top:385.500px" width="6" height="4" viewBox="0 0 6 4"><path d="M.8 3l2.200-2 2.200 2" stroke="#9a9a9a" stroke-width=".8"/></svg>
<svg class="ic" style="left:952px;top:522px" width="6" height="4" viewBox="0 0 6 4"><path d="M.8 1l2.200 2 2.200-2" stroke="#9a9a9a" stroke-width=".8"/></svg>
<svg class="a" style="left:811px;top:379px" width="30" height="150" viewBox="811 379 30 150" fill="none">
<defs><pattern id="ck" width="4" height="5" patternUnits="userSpaceOnUse"><rect width="4" height="5" fill="#fafafa"/><rect x=".5" y=".8" width="1.100" height="1.100" fill="#9a9a9a"/><rect x="2.500" y="3.200" width="1.100" height="1.100" fill="#a8a8a8"/><rect x="2" y="1.200" width=".8" height=".8" fill="#d0d0d0"/></pattern></defs>
<path d="M815.500 386.500h6v6h-6zM815.500 449.500h6v6h-6zM815.500 470.500h6v6h-6zM815.500 491.500h6v6h-6zM815.500 512.500h6v6h-6z" stroke="#5e5e5e" stroke-width=".8"/>
<g transform="translate(818,411)"><path d="M-4 0c1.500-2.600 6.500-2.600 8 0c-1.500 2.600-6.500 2.600-8 0z" fill="#e8e8e8"/><circle r="1.300" fill="#535353"/></g><g transform="translate(818,432)"><path d="M-4 0c1.500-2.600 6.500-2.600 8 0c-1.500 2.600-6.500 2.600-8 0z" fill="#e8e8e8"/><circle r="1.300" fill="#535353"/></g><rect x="829" y="382" width="8.500" height="15" fill="url(#ck)"/><rect x="829" y="403.500" width="8.500" height="15" fill="url(#ck)"/><rect x="829" y="424.500" width="8.500" height="15" fill="url(#ck)"/><rect x="829" y="445.500" width="8.500" height="15" fill="url(#ck)"/><rect x="829" y="466.500" width="8.500" height="15" fill="url(#ck)"/><rect x="829" y="487.500" width="8.500" height="15" fill="url(#ck)"/><rect x="833.200" y="424.500" width="4.300" height="15" fill="#2e7d43"/>
<rect x="827.300" y="507.800" width="12" height="18.400" fill="none" stroke="#e8e8e8" stroke-width=".8"/><rect x="828.800" y="509.300" width="9" height="15.400" fill="#d4122f"/>
</svg>
<div class="t" style="left:843px;top:385.500px">图层 3 拷贝</div>
<div class="t" style="left:843px;top:407px">图层 2</div>
<div class="t" style="left:843px;top:428px">图层 3</div>
<div class="t" style="left:843px;top:448px;font-size:5.500px;color:#dadada;letter-spacing:.1px">c1c2c3ff000000e0a0e4c6e 1ff&sup2;&sup2;</div>
<div class="t" style="left:843px;top:469.500px;font-size:5.500px;color:#c4c4c4">图层 5 00000001</div>
<div class="t" style="left:843px;top:491px">图层 4</div>
<div class="t" style="left:843px;top:512px">图层 6</div>
<div class="a" style="left:811px;top:527.500px;width:148px;height:13.500px;background:#535353;border-top:1px solid #474747"></div>
<svg class="a" style="left:850px;top:528px" width="100" height="13" viewBox="850 528 100 13" fill="none" stroke="#e2e2e2">
<g stroke="#7a7a7a" stroke-width=".9"><circle cx="856" cy="534.500" r="1.800"/><circle cx="859.500" cy="534.500" r="1.800"/></g>
<path d="M870.500 537.500v-5.500c0-1.200 1-1.700 2.200-1.300M869.300 533.500h3M873 533.800l2.800 3.700M875.800 533.800l-2.800 3.700" stroke-width=".9"/>
<path d="M881 531h8v7h-8z" fill="#e8e8e8" stroke="none"/><circle cx="885" cy="534.500" r="2" fill="#535353" stroke="none"/>
<circle cx="899.500" cy="534.500" r="3.400" stroke-width="1"/><path d="M896.700 536.800a3.400 3.400 0 0 0 5.200-4.800z" fill="#e2e2e2" stroke="none"/>
<path d="M909.500 531h3l.8 1h4.700v6h-8.500z" fill="#e6e6e6" stroke="none"/>
<path d="M923.500 532.500v5.500h5.500v-5.500zM925.500 532.500v-1.500h5.500v5.500h-2" stroke-width=".9"/>
<path d="M938.500 532.500h5v6h-5zM937.500 531.500h7M940 530.500h2" stroke="#a8a8a8" stroke-width=".9"/><path d="M940.200 534v3M941.800 534v3" stroke="#a8a8a8" stroke-width=".6"/>
</svg>
<!-- WATERMARK -->
<svg class="a" style="left:811px;top:436px" width="140" height="92" viewBox="811 436 140 92">
<defs><clipPath id="wc"><rect x="812" y="436" width="139" height="92"/></clipPath>
<mask id="dum"><rect x="811" y="436" width="140" height="92" fill="#fff"/><text x="838.800" y="491" font-family="Liberation Sans, sans-serif" font-weight="bold" font-size="25" fill="#000" textLength="30.500" lengthAdjust="spacingAndGlyphs">du</text></mask></defs>
<g clip-path="url(#wc)" opacity=".8" fill="#f4f4f4">
<g mask="url(#dum)">
<ellipse cx="835.500" cy="460.500" rx="6.500" ry="9" />
<ellipse cx="847.500" cy="449" rx="6" ry="8.500" transform="rotate(-6 847.500 449)"/>
<ellipse cx="863.500" cy="450" rx="6.200" ry="8.500" transform="rotate(10 863.500 450)"/>
<ellipse cx="874" cy="465.500" rx="6.200" ry="8.500" transform="rotate(8 874 465.500)"/>
<path d="M855 463C861 463 865 469 868.500 474C873 479 877 484 876 491C875 496 869 498 862 497.500C857 497 853 496.500 848 497.500C841 498.500 835.500 496 834.500 491C833.500 485 838 481 842 476C846 470 849 463 855 463z"/>
</g>
<rect x="820.500" y="466" width="6" height="5" />
<rect x="820.300" y="472.800" width="6.200" height="23"/>
<path d="M811 479c3-1 5.500 .5 5.500 4v14h-5.500z"/>
<text x="818" y="518.500" font-family="Liberation Sans, sans-serif" font-size="20.500" textLength="127" lengthAdjust="spacingAndGlyphs" stroke="#f4f4f4" stroke-width=".65">an.baidu.com</text>
<path d="M811 506.500l5.500 9-2 1.200-3.500-5.500z"/>
</g>
</svg>
<!-- TASKBAR -->
<div class="t" style="left:23px;top:533.500px;color:#d0d0d0">33.33%</div>
<div class="t" style="left:66px;top:533.500px;color:#d0d0d0">文档:5.93M/6.3M</div>
<svg class="ic" style="left:136px;top:535px" width="4" height="6" viewBox="0 0 4 6"><path d="M.8.800l2 2.200-2 2.200" stroke="#bdbdbd" stroke-width=".9"/></svg>
<div class="a" style="left:0;top:541px;width:1000px;height:5px;background:linear-gradient(to bottom,#4a5560 0,#1c2a3a 1.500px,#14202e 100%)"></div>
<div class="a" style="left:7px;top:543px;width:14px;height:8px;border-radius:50%;background:#9fc4e0;border:1px solid #d6e6f2"></div>
<div class="a" style="left:37px;top:544px;width:6px;height:4px;border-radius:50% 50% 0 0;background:#b7cf3a"></div>
<div class="a" style="left:43px;top:544px;width:7px;height:4px;border-radius:50% 50% 0 0;background:#5b9bd8"></div>
<div class="a" style="left:73px;top:544px;width:10px;height:3px;border-radius:50% 50% 0 0;background:#4f8f5a"></div>
<div class="a" style="left:95px;top:542.500px;width:82px;height:4px;background:linear-gradient(to right,#d4d4d4,#9a9a9a);border:.5px solid #e8e8e8"></div>
<div class="a" style="left:180px;top:542.500px;width:82px;height:4px;background:linear-gradient(to right,#cfcfcf,#8c8c8c);border:.5px solid #e8e8e8"></div>
<div class="a" style="left:184px;top:543px;width:5px;height:3px;background:#e6d27a"></div>
<div class="a" style="left:264px;top:542.500px;width:82px;height:4px;background:linear-gradient(to right,#e0e0e0,#b0b0b0);border:.5px solid #f0f0f0"></div>
<div class="a" style="left:268px;top:543.500px;width:15px;height:3px;background:#136f7a"></div>
<div class="a" style="left:965px;top:544.500px;width:18px;height:1.500px;background:#c8d0d8;opacity:.6"></div>
<div class="a" style="left:988px;top:541.500px;width:12px;height:5px;background:#5c7488;opacity:.8"></div>
</body>
</html>
